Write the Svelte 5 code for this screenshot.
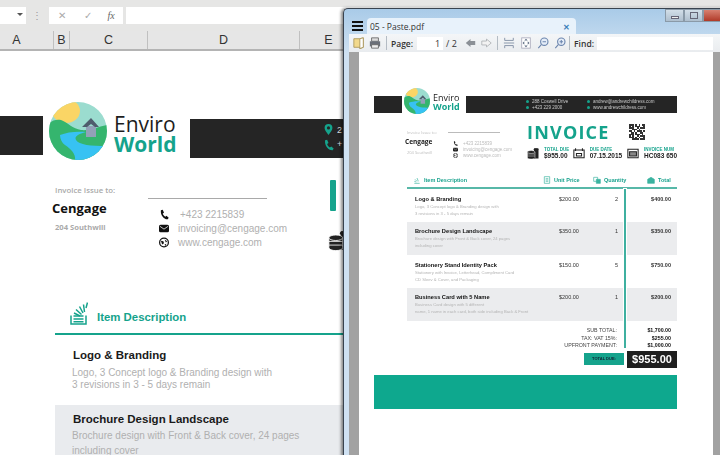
<script>
  const columns = [
    { label: 'A', w: 54 }, { label: 'B', w: 16 }, { label: 'C', w: 78 },
    { label: 'D', w: 152 }, { label: 'E', w: 58 }
  ];
  const sheetItems = [
    { title: 'Logo & Branding', lines: ['Logo, 3 Concept logo & Branding design with', '3 revisions in 3 - 5 days remain'], shade: false },
    { title: 'Brochure Design Landscape', lines: ['Brochure design with Front & Back cover, 24 pages', 'including cover'], shade: true }
  ];
  const pdfItems = [
    { title: 'Logo & Branding', lines: ['Logo, 3 Concept logo & Branding design with', '3 revisions in 3 - 5 days remain'], price: '$200.00', qty: 2, total: '$400.00', shade: false },
    { title: 'Brochure Design Landscape', lines: ['Brochure design with Front & Back cover, 24 pages', 'including cover'], price: '$350.00', qty: 1, total: '$350.00', shade: true },
    { title: 'Stationery Stand Identity Pack', lines: ['Stationery with Invoice, Letterhead, Compliment Card', 'CD Sleev & Cover, and Packaging'], price: '$150.00', qty: 5, total: '$750.00', shade: false },
    { title: 'Business Card with 5 Name', lines: ['Business Card design with 5 different', 'name, 1 name in each card, both side including Back & Front'], price: '$200.00', qty: 1, total: '$200.00', shade: true }
  ];
  const totals = [
    ['SUB TOTAL:', '$1,700.00'], ['TAX: VAT 15%:', '$255.00'], ['UPFRONT PAYMENT:', '$1,000.00']
  ];
  const contact = ['+423 2215839', 'invoicing@cengage.com', 'www.cengage.com'];
  const qr = [
    '1110101011', '1010111001', '1110010111', '0011101000', '1101011101',
    '0110100110', '1110111010', '1010010111', '1110101001', '0011110111'
  ];
</script>

{#snippet logo(id, cls)}
  <svg class={cls} viewBox="0 0 58 58">
    <clipPath {id}><circle cx="29" cy="29" r="29" /></clipPath>
    <g clip-path="url(#{id})">
      <rect width="58" height="58" fill="#9bdccf" />
      <ellipse cx="17" cy="9" rx="14" ry="12" fill="#fad565" />
      <path d="M0 21C4 18 8 17 12 18C18 20 24 27 32 28C40 29 48 25 58 23V58H0Z" fill="#35b56e" />
      <path d="M11 33C18 30 28 29 37 30C30 32 25 34 27 38C30 43 42 44 58 44V58H26C27 52 22 47 16 43C13 41 11 37 11 33Z" fill="#37c2f3" />
      <path d="M37 24H47V35H37Z" fill="#93a1b8" />
      <path d="M33 25L42 16L50 25H46L42 22L38 25Z" fill="#4f5c6d" />
    </g>
  </svg>
{/snippet}

{#snippet phone(cls)}
  <svg class={cls} viewBox="0 0 16 16"><path d="M3 1L6 .5 8 5 6 6.500C6.500 8.500 8 10.500 10 11.500L12 10 15.500 13 14 15.500C8 16 2 9 3 1Z" /></svg>
{/snippet}
{#snippet mail(cls)}
  <svg class={cls} viewBox="0 0 16 12"><rect width="16" height="12" rx="2.500" /><path d="M1.500 2.500L8 7l6.500-4.500" fill="none" stroke="#fff" stroke-width="1.200" /></svg>
{/snippet}
{#snippet globe(cls)}
  <svg class={cls} viewBox="0 0 16 16"><circle cx="8" cy="8" r="7" fill="none" stroke="currentColor" stroke-width="2" /><path d="M3 5l4 1 1 3-3 2ZM9 3l4 3-2 2ZM9 11l3-1-2 4Z" /></svg>
{/snippet}
{#snippet coins(cls)}
  <svg class={cls} viewBox="0 0 24 22">
    <path d="M14 1h9v20h-9Z" fill="#222" /><ellipse cx="18" cy="3" rx="5" ry="2.500" fill="#222" />
    <g fill="#222" stroke="#fff" stroke-width=".9">
      <path d="M1 8h15v3.500a7.500 3 0 0 1-15 0Z" /><path d="M1 12h15v3.500a7.500 3 0 0 1-15 0Z" /><path d="M1 16h15v3a7.500 3 0 0 1-15 0Z" />
      <ellipse cx="8.500" cy="8" rx="7.500" ry="3" />
    </g>
  </svg>
{/snippet}
{#snippet stack(cls)}
  <svg class={cls} viewBox="0 0 18 23" fill="none" stroke="#15a38c" stroke-width="1.500">
    <path d="M1 13.500V22H16V13.500" /><path d="M3.500 14H13.500M3.500 17H13.500M3.500 19.700H13.500" />
    <path d="M4 11L10 14M6 7.500L11.500 12.500M9.500 4.500L13 11M13.500 2.500L14.500 10M17.500 .500L16 6" />
  </svg>
{/snippet}
{#snippet sheetIcon(cls, kind)}
  <svg class={cls} viewBox="0 0 12 12" fill="none" stroke="#3bb3a0" stroke-width="1">
    {#if kind === 'doc'}
      <path d="M2 1H10V11H2Z" /><path d="M4 4H8M4 6H8M4 8H8" />
    {:else if kind === 'tag'}
      <path d="M1 2H7V8H1Z" /><path d="M5 5H11V11H5Z" fill="#3bb3a0" />
    {:else if kind === 'box'}
      <path d="M1 5L6 2 11 5V11H1Z" fill="#3bb3a0" />
    {:else}
      <path d="M2 11H10M2 8L5 9M3 5L6 8M6 3L8 8" />
    {/if}
  </svg>
{/snippet}

<div class="screen">
  <div class="excel">
    <div class="ribbon">
      <div class="namebox"><span class="caret"></span></div>
      <span class="dots">⋮</span>
      <div class="fxbox"><span class="x">✕</span><span class="v">✓</span><span class="fx">fx</span></div>
      <div class="formula"></div>
    </div>
    <div class="headers">
      {#each columns as col}
        <div class="colhead" style="width:{col.w}px">{col.label}</div>
      {/each}
    </div>
    <div class="sheet">
      <div class="brand">
        <div class="block"></div>
        {@render logo('lg', 'biglogo')}
        <div class="word"><div class="enviro">Enviro</div><div class="world">World</div></div>
        <div class="bar">
          <div class="barIcons">
            <svg class="pin" viewBox="0 0 10 14"><path fill-rule="evenodd" d="M5 0a5 5 0 0 1 5 5c0 3-3 6-5 9C3 11 0 8 0 5a5 5 0 0 1 5-5Zm0 3a2 2 0 1 0 0 4 2 2 0 0 0 0-4Z" /></svg>
            <svg class="tealphone" viewBox="0 0 16 16"><path d="M3 1L6 .5 8 5 6 6.500C6.500 8.500 8 10.500 10 11.500L12 10 15.500 13 14 15.500C8 16 2 9 3 1Z" /></svg>
          </div>
          <div class="barText"><span>2</span><span>+</span></div>
        </div>
      </div>
      <div class="info">
        <div class="issue">
          <div class="issueLabel">Invoice Issue to:</div>
          <div class="company">Cengage</div>
          <div class="addr">204 Southwill</div>
        </div>
        <div class="contact">
          <div class="rule"></div>
          <div class="cRow first">{@render phone('cIcon')}<span>{contact[0]}</span></div>
          <div class="cRow">{@render mail('cIcon mailIcon')}<span>{contact[1]}</span></div>
          <div class="cRow">{@render globe('cIcon')}<span>{contact[2]}</span></div>
        </div>
        <div class="cutoff">
          <div class="tealStub"></div>
          {@render coins('coin')}
        </div>
      </div>
      <div class="itemHead">
        {@render stack('stack')}
        <span>Item Description</span>
      </div>
      <div class="sheetRows">
        {#each sheetItems as item}
          <div class="sheetRow" class:shade={item.shade}>
            <div class="sTitle">{item.title}</div>
            <div class="sDesc" class:loose={item.shade}>
              {#each item.lines as line}<div>{line}</div>{/each}
            </div>
          </div>
        {/each}
      </div>
    </div>
  </div>

  <div class="window">
    <div class="titlebar">
      <div class="burger"><i></i><i></i><i></i></div>
      <div class="tab"><span>05 - Paste.pdf</span><b>✕</b></div>
      <div class="winbtns">
        <div class="wb"><i class="minI"></i></div>
        <div class="wb"><i class="maxI"></i></div>
        <div class="wb close"></div>
      </div>
    </div>
    <div class="toolbar">
      <svg class="tb folder" viewBox="0 0 14 14"><path d="M1 2H8L12 1V12L8 13.500V12H1Z" fill="#f2d98c" stroke="#a89458" /><path d="M8 2L12 1V12L8 13.500Z" fill="#fff" stroke="#a89458" /></svg>
      <svg class="tb" viewBox="0 0 14 14"><path d="M3 1H11V5H3Z" fill="#ddd" stroke="#666" /><path d="M1 5H13V11H1Z" fill="#6a6f78" /><path d="M3 9H11V13H3Z" fill="#eee" stroke="#666" /></svg>
      <span class="sep"></span>
      <span class="tl">Page:</span>
      <div class="pageBox">1</div>
      <span class="tl2">/ 2</span>
      <svg class="arrow" viewBox="0 0 14 12"><path d="M1 6L7 1V3.500H13V8.500H7V11Z" fill="#8b9096" /></svg>
      <svg class="arrow" viewBox="0 0 14 12"><path d="M13 6L7 1V3.500H1V8.500H7V11Z" fill="#f2f2f2" stroke="#a8acb0" /></svg>
      <span class="sep"></span>
      <svg class="tb" viewBox="0 0 14 14" fill="none" stroke="#7b8aa0"><path d="M2 1V4H12V1M1 7H13M2 13V10H12V13" /></svg>
      <svg class="tb" viewBox="0 0 14 14"><rect x="2" y="1" width="10" height="12" fill="#fff" stroke="#aab" /><path d="M7 2L9 4H5ZM7 12L9 10H5ZM3 7L5 5V9ZM11 7L9 5V9Z" fill="#5b6a80" /></svg>
      <svg class="tb" viewBox="0 0 14 14" fill="none" stroke="#6c86ae" stroke-width="1.300"><circle cx="8.500" cy="5.500" r="4.300" fill="#e5edf8" /><path d="M5 9L1.500 13M6.500 5.500H10.500" /></svg>
      <svg class="tb" viewBox="0 0 14 14" fill="none" stroke="#6c86ae" stroke-width="1.300"><circle cx="8.500" cy="5.500" r="4.300" fill="#e5edf8" /><path d="M5 9L1.500 13M6.500 5.500H10.500M8.500 3.500V7.500" /></svg>
      <span class="sep last"></span>
      <span class="tl find">Find:</span>
      <div class="findBox"></div>
    </div>
    <div class="viewer">
      <div class="page">
        <div class="doc">
          <div class="dBrand">
            <div class="dBlock"></div>
            {@render logo('sm', 'smlogo')}
            <div class="dWord"><div>Enviro</div><div class="dWorld">World</div></div>
            <div class="dBar">
              <div class="dCol first"><div><i></i>288 Coswell Drive</div><div><i></i>+423 229 2000</div></div>
              <div class="dCol"><div><i></i>andrew@andrewchildress.com</div><div><i></i>www.andrewchildress.com</div></div>
            </div>
          </div>
          <div class="dInfo">
            <div class="dIssue">
              <div class="dLabel">Invoice Issue to:</div>
              <div class="dCompany">Cengage</div>
              <div class="dAddr">204 Southwill</div>
            </div>
            <div class="dContact">
              <div class="dRule"></div>
              <div class="dc">{@render phone('dcIcon')}<span>{contact[0]}</span></div>
              <div class="dc">{@render mail('dcIcon')}<span>{contact[1]}</span></div>
              <div class="dc">{@render globe('dcIcon')}<span>{contact[2]}</span></div>
            </div>
            <div class="dRight">
              <div class="dTop">
                <div class="invoice">INVOICE</div>
                <div class="qr">
                  {#each qr as row}{#each row.split('') as cell}<i class:on={cell === '1'}></i>{/each}{/each}
                </div>
              </div>
              <div class="stats">
                <div class="stat one">{@render coins('stIcon')}<div><small>TOTAL DUE</small><b>$955.00</b></div></div>
                <div class="stat two">
                  <svg class="stIcon" viewBox="0 0 14 12" fill="none" stroke="#222" stroke-width="1.200"><path d="M1 2H13V11H1Z" /><path d="M3 0V3M11 0V3M4 6H10V9H4Z" /></svg>
                  <div><small>DUE DATE</small><b>07.15.2015</b></div>
                </div>
                <div class="stat">
                  <svg class="stIcon" viewBox="0 0 14 12" fill="none" stroke="#222" stroke-width="1.200"><path d="M1 1H13V11H1Z" /><path d="M3 4H11V9H3Z" fill="#888" /></svg>
                  <div><small>INVOICE NUM</small><b>HC083 650</b></div>
                </div>
              </div>
            </div>
          </div>
          <div class="table">
            <div class="tHead">
              <div class="th desc">{@render sheetIcon('thIcon', 'rays')}Item Description</div>
              <div class="th price">{@render sheetIcon('thIcon', 'doc')}Unit Price</div>
              <div class="th qty">{@render sheetIcon('thIcon', 'tag')}Quantity</div>
              <div class="th tot">{@render sheetIcon('thIcon', 'box')}Total</div>
            </div>
            {#each pdfItems as item}
              <div class="tRow" class:shade={item.shade}>
                <div class="tDesc">
                  <div class="tTitle">{item.title}</div>
                  {#each item.lines as line}<div class="tLine">{line}</div>{/each}
                </div>
                <div class="tPrice">{item.price}</div>
                <div class="tQty">{item.qty}</div>
                <div class="tTotal">{item.total}</div>
              </div>
            {/each}
            <div class="summary">
              {#each totals as t}
                <div class="sumRow"><span>{t[0]}</span><b>{t[1]}</b></div>
              {/each}
            </div>
            <div class="dueRow">
              <div class="dueLabel">TOTAL DUE:</div>
              <div class="dueValue">$955.00</div>
            </div>
            <div class="vline"></div>
          </div>
          <div class="banner"></div>
        </div>
      </div>
    </div>
  </div>
</div>

<style>
  :global(body) { margin: 0; background: #fff; }
  .screen { position: relative; width: 720px; height: 455px; overflow: hidden; font-family: "Liberation Sans", Arial, sans-serif; }

  .excel { display: flex; flex-direction: column; height: 455px; }
  .ribbon { height: 31px; box-sizing: border-box; padding-top: 7px; background: #e6e6e5; display: flex; align-items: flex-start; }
  .namebox { width: 26px; height: 17px; background: #fff; position: relative; }
  .caret { position: absolute; left: 17px; top: 6px; border: 3px solid transparent; border-top: 3px solid #555; }
  .dots { width: 23px; text-align: center; font-size: 10px; color: #999; line-height: 17px; }
  .fxbox { width: 75px; height: 17px; background: #fff; display: flex; align-items: center; color: #aaa; font-size: 10px; }
  .x { margin-left: 9px; width: 26px; }
  .v { width: 24px; }
  .fx { font-family: "Liberation Serif", serif; font-style: italic; font-size: 10px; color: #666; }
  .formula { width: 600px; height: 17px; margin-left: 3px; background: #fff; }
  .headers { height: 20px; box-sizing: border-box; display: flex; background: #e6e6e6; border-bottom: 2px solid #b4b4b4; }
  .colhead { box-sizing: border-box; border-right: 1px solid #c0c0c0; text-align: center; font-size: 12.500px; line-height: 19px; color: #333; }
  .colhead:first-child { padding-right: 20px; }
  .sheet { flex: 1; overflow: hidden; }
  .brand { display: flex; align-items: flex-start; padding-top: 51px; height: 58px; }
  .block { width: 43px; height: 39px; margin-top: 14px; background: #252525; flex: none; }
  .biglogo { width: 58px; height: 58px; margin-left: 6px; flex: none; }
  .word { margin-left: 7px; width: 76px; flex: none; font-family: "Open Sans", sans-serif; font-size: 21px; line-height: 20px; padding-top: 12px; }
  .enviro { color: #1d1d1d; }
  .world { color: #15a38c; font-weight: 700; }
  .bar { width: 153px; height: 39px; margin-top: 17px; background: #252525; flex: none; display: flex; justify-content: flex-end; gap: 3px; }
  .barIcons { display: flex; flex-direction: column; width: 11px; padding-top: 5px; gap: 4px; }
  .pin { width: 9px; height: 11px; fill: #15a38c; margin-left: 1px; }
  .tealphone { width: 11px; height: 12px; fill: #15a38c; }
  .barText { width: 6px; color: #ddd; font-size: 9px; line-height: 14px; display: flex; flex-direction: column; padding-top: 4px; }
  .info { display: flex; padding-top: 21px; height: 120px; }
  .issue { margin-left: 55px; width: 93px; flex: none; color: #aaa; font-family: "Open Sans", sans-serif; }
  .issueLabel { font-size: 7.800px; font-weight: 600; line-height: 20px; margin-top: -1px; }
  .company { font-size: 13px; font-weight: 700; color: #111; margin-left: -3px; line-height: 16px; }
  .addr { font-size: 7.600px; font-weight: 700; line-height: 14px; margin-top: 4px; }
  .contact { width: 182px; flex: none; }
  .rule { width: 119px; height: 1px; background: #a9a9a9; margin-top: 17px; margin-bottom: 8px; }
  .cRow { display: flex; align-items: center; height: 14px; font-size: 10px; color: #b0b0b0; padding-left: 11px; }
  .cRow span { margin-left: 9px; white-space: nowrap; }
  .cRow.first span { margin-left: 11px; }
  .cIcon { width: 10px; height: 11px; fill: #111; color: #111; flex: none; }
  .cutoff { flex: none; margin-top: -1px; }
  .tealStub { width: 6px; height: 31px; border-radius: 1px; background: #15a38c; }
  .coin { width: 22px; height: 21px; margin-top: 19px; margin-left: -2px; display: block; }
  .itemHead { margin-left: 55px; display: flex; align-items: flex-end; height: 24px; padding: 0 0 8px 15px; width: 273px; border-bottom: 2px solid #15a38c; color: #15a38c; font-weight: 700; font-size: 11.400px; }
  .stack { width: 18px; height: 23px; }
  .itemHead span { margin-left: 9px; line-height: 16px; }
  .sheetRows { margin-left: 55px; }
  .sheetRow { padding-left: 18px; }
  .sheetRow:first-child { height: 70px; box-sizing: border-box; padding-top: 12px; }
  .sheetRow.shade { background: #e9ebee; padding-top: 6px; height: 60px; box-sizing: border-box; }
  .sTitle { font-weight: 700; font-size: 11.500px; line-height: 16px; color: #1a1a1a; }
  .sDesc { color: #b0b0b0; font-size: 10px; line-height: 12px; margin-top: 4px; margin-left: -1px; }
  .sDesc.loose { line-height: 15px; margin-top: 1px; }

  .window { position: absolute; left: 343px; top: 8px; width: 390px; height: 460px; box-sizing: border-box; border: 1px solid #39434f; border-right: 0; border-bottom: 0; border-top-left-radius: 5px; background: linear-gradient(#a9cbe8, #cfe1f2 45px); box-shadow: -2px 0 3px rgba(0, 0, 0, 0.45); padding-left: 5px; }
  .titlebar { height: 25px; display: flex; position: relative; margin-left: -5px; }
  .burger { width: 11px; margin: 12px 0 0 8px; display: flex; flex-direction: column; gap: 2px; flex: none; }
  .burger i { height: 2px; background: #111; display: block; }
  .tab { width: 209px; height: 16px; margin-top: 9px; margin-left: 4px; background: #e8f2fb; border-radius: 4px 4px 0 0; display: flex; justify-content: space-between; align-items: center; padding: 0 6px 0 3px; box-sizing: border-box; font-size: 8.500px; color: #333; font-family: "Open Sans", sans-serif; }
  .tab b { color: #3b7fb8; font-size: 8px; }
  .winbtns { display: flex; position: absolute; left: 321px; top: 0; }
  .wb { width: 19px; height: 13px; box-sizing: border-box; border: 1px solid #8a9aa8; background: linear-gradient(#d3dfe9, #aebfce); position: relative; }
  .wb.close { width: 30px; background: linear-gradient(#d88070, #b03a28); }
  .minI { position: absolute; left: 5px; top: 6px; width: 8px; height: 3px; background: #eee; border: 1px solid #667; box-sizing: border-box; }
  .maxI { position: absolute; left: 5px; top: 2px; width: 8px; height: 7px; border: 1px solid #667; box-sizing: border-box; }
  .toolbar { height: 18px; background: linear-gradient(#f4f6f8, #e9ecef); display: flex; align-items: center; font-size: 8.500px; color: #333; font-family: "Open Sans", sans-serif; }
  .tb { width: 12px; height: 12px; flex: none; margin-right: 5px; }
  .folder { margin-left: 4px; margin-right: 4px; }
  .sep { width: 1px; height: 14px; background: #b4bcc4; margin-right: 5px; flex: none; }
  .sep.last { margin-left: -2px; }
  .tl { font-weight: 600; margin-left: -1px; }
  .pageBox { width: 26px; height: 13px; margin-left: 4px; background: #fff; box-sizing: border-box; text-align: right; padding-right: 3px; line-height: 13px; font-size: 9px; flex: none; }
  .tl2 { margin-left: 3px; font-size: 9px; width: 10px; margin-right: 9px; flex: none; white-space: nowrap; }
  .arrow { width: 11px; height: 10px; margin-right: 5px; flex: none; }
  .find { width: 20px; flex: none; }
  .findBox { width: 116px; height: 13px; margin-left: 3px; background: #fff; flex: none; }
  .viewer { background: #a2a2a2; height: 420px; padding-left: 10px; }
  .page { width: 354px; height: 420px; background: #fff; box-sizing: border-box; padding: 36px 36px 0 15px; filter: blur(0.4px); }
  .doc { width: 303px; }
  .dBrand { display: flex; align-items: flex-start; height: 27px; }
  .dBlock { width: 28px; height: 17px; margin-top: 8px; background: #252525; flex: none; }
  .smlogo { width: 26px; height: 26px; margin-left: 2px; flex: none; }
  .dWord { width: 33px; margin-left: 3px; margin-top: 5px; flex: none; font-family: "Open Sans", sans-serif; font-size: 9px; line-height: 9px; color: #222; }
  .dWorld { color: #15a38c; font-weight: 700; }
  .dBar { width: 211px; height: 17px; margin-top: 8px; background: #252525; display: flex; color: #c9c9c9; font-size: 4.500px; box-sizing: border-box; padding: 3px 0 0 60px; white-space: nowrap; }
  .dCol { line-height: 5.500px; }
  .dCol.first { width: 61px; flex: none; }
  .dCol i { display: inline-block; width: 3px; height: 3px; border-radius: 2px; background: #15a38c; margin-right: 3px; }
  .dInfo { display: flex; margin: 9px 0 0 33px; }
  .dIssue { width: 41px; flex: none; color: #bdbdbd; font-size: 4px; font-family: "Open Sans", sans-serif; padding-top: 6px; }
  .dLabel { line-height: 5px; white-space: nowrap; }
  .dCompany { font-weight: 700; font-size: 6.500px; color: #222; line-height: 8px; margin: 3px 0 0 -2px; }
  .dAddr { line-height: 5px; margin-top: 4px; }
  .dContact { width: 79px; flex: none; color: #bbb; font-size: 4.500px; }
  .dRule { width: 52px; height: 1px; background: #bbb; margin: 8px 0 7px; }
  .dc { display: flex; align-items: center; height: 6px; padding-left: 5px; white-space: nowrap; }
  .dc span { margin-left: 5px; }
  .dcIcon { width: 5px; height: 5px; fill: #222; color: #222; flex: none; }
  .dRight { width: 150px; flex: none; }
  .dTop { display: flex; height: 20px; }
  .invoice { color: #15a38c; font-weight: 700; font-size: 18px; letter-spacing: 1.200px; line-height: 17px; width: 102px; font-family: "Open Sans", sans-serif; white-space: nowrap; }
  .qr { width: 16px; height: 16px; display: grid; grid-template-columns: repeat(10, 1.600px); grid-auto-rows: 1.600px; }
  .qr i { background: #fff; }
  .qr i.on { background: #333; }
  .stats { display: flex; margin-top: 3px; }
  .stat { display: flex; align-items: center; gap: 5px; }
  .stat.one { width: 47px; }
  .stat.two { width: 56px; }
  .stIcon { width: 12px; height: 11px; flex: none; }
  .stat small { display: block; font-size: 4.500px; line-height: 5px; color: #15a38c; font-weight: 700; white-space: nowrap; }
  .stat b { display: block; font-size: 6.500px; line-height: 7px; color: #222; white-space: nowrap; }
  .table { position: relative; margin: 14px 0 0 33px; width: 270px; }
  .tHead { display: flex; height: 14px; border-bottom: 2px solid #57b8a8; font-size: 5.500px; font-weight: 700; color: #1aa38e; align-items: center; }
  .th { display: flex; align-items: center; gap: 3px; }
  .thIcon { width: 8px; height: 8px; flex: none; }
  .th.desc { padding-left: 6px; width: 130px; }
  .th.price { width: 50px; }
  .th.qty { width: 54px; }
  .tRow { display: grid; grid-template-columns: 152px 40px 19px 53px; height: 33px; font-size: 5.500px; color: #333; box-sizing: border-box; padding-top: 7px; }
  .tRow.shade { background: #ebecee; padding-top: 6px; }
  .tDesc { padding-left: 8px; }
  .tTitle { font-size: 5.700px; font-weight: 700; color: #111; line-height: 7px; white-space: nowrap; }
  .tLine { font-size: 4.200px; color: #b4b4b4; line-height: 7px; white-space: nowrap; }
  .tPrice { line-height: 7px; }
  .tQty { text-align: right; line-height: 7px; }
  .tTotal { text-align: right; font-weight: 700; line-height: 7px; }
  .summary { padding-top: 6px; }
  .sumRow { display: grid; grid-template-columns: 210px 54px; height: 7.500px; line-height: 7.500px; font-size: 5.300px; color: #444; }
  .sumRow span { text-align: right; }
  .sumRow b { text-align: right; color: #111; }
  .dueRow { display: flex; justify-content: flex-end; align-items: center; gap: 3px; margin-top: 1px; }
  .dueLabel { width: 40px; height: 12px; background: #15a38c; font-size: 4px; font-weight: 700; color: #123; text-align: center; line-height: 12px; }
  .dueValue { width: 50px; height: 17px; background: #1f1f1f; color: #fff; font-size: 11px; font-weight: 700; line-height: 17px; text-align: center; }
  .vline { position: absolute; left: 217px; top: 16px; bottom: 20px; width: 2px; background: #3fb0a0; box-shadow: 0 0 0 1px #fff; }
  .banner { height: 34px; margin-top: 7px; background: #0ea88e; }
</style>
